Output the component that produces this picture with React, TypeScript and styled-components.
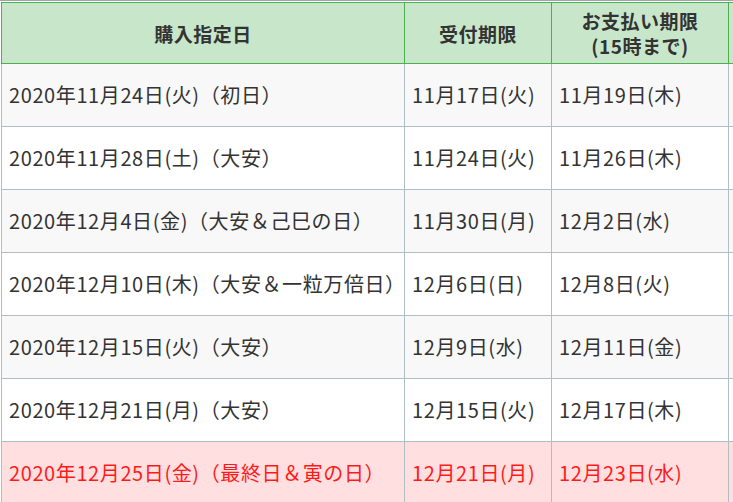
import { FC } from "react";
import styled, { createGlobalStyle } from "styled-components";

const GlobalStyle = createGlobalStyle`
    html, body {
        margin: 0;
        padding: 0;
        background: #fff;
        overflow: hidden;
    }
    body {
        font-family: "Noto Sans CJK JP", "Noto Sans", sans-serif;
        color: #333;
    }
`;

const Wrapper = styled.div`
    width: 733px;
    height: 502px;
    overflow: hidden;
    padding: 1px 0 0 1px;
    box-sizing: border-box;
    border-top: 1px solid #9aa9a0;
`;

const Table = styled.table`
    border-collapse: collapse;
    table-layout: fixed;
    width: 900px;
`;

const HeadCell = styled.th<{ $width: number }>`
    width: ${(p) => p.$width}px;
    height: 61px;
    box-sizing: border-box;
    padding: 5px 4px;
    background: #c8e6c9;
    border: 1px solid #4caf50;
    color: #333;
    font-size: 19px;
    font-weight: bold;
    line-height: 25px;
    text-align: center;
    vertical-align: middle;
    letter-spacing: 0.5px;
    white-space: nowrap;
`;

const HeadLine = styled.span`
    display: block;
`;

const Row = styled.tr<{ $last?: boolean }>`
    background: ${(p) => (p.$last ? "#ffdfe0" : "#fff")};

    &:nth-child(odd) {
        background: ${(p) => (p.$last ? "#ffdfe0" : "#f8f8f8")};
    }

    & > td {
        color: ${(p) => (p.$last ? "#ff1a1a" : "#333")};
    }
`;

const Cell = styled.td`
    height: 63px;
    box-sizing: border-box;
    padding: 0 7px;
    border: 1px solid #b0bec5;
    font-size: 20px;
    line-height: 28px;
    letter-spacing: 0.6px;
    white-space: nowrap;
    vertical-align: middle;
`;

interface IRow {
    date: string;
    accept: string;
    pay: string;
}

const rows: IRow[] = [
    { date: "2020年11月24日(火)（初日）", accept: "11月17日(火)", pay: "11月19日(木)" },
    { date: "2020年11月28日(土)（大安）", accept: "11月24日(火)", pay: "11月26日(木)" },
    { date: "2020年12月4日(金)（大安＆己巳の日）", accept: "11月30日(月)", pay: "12月2日(水)" },
    { date: "2020年12月10日(木)（大安＆一粒万倍日）", accept: "12月6日(日)", pay: "12月8日(火)" },
    { date: "2020年12月15日(火)（大安）", accept: "12月9日(水)", pay: "12月11日(金)" },
    { date: "2020年12月21日(月)（大安）", accept: "12月15日(火)", pay: "12月17日(木)" },
    { date: "2020年12月25日(金)（最終日＆寅の日）", accept: "12月21日(月)", pay: "12月23日(水)" },
];

const App: FC = () => {
    return (
        <>
            <GlobalStyle />
            <Wrapper>
                <Table>
                    <thead>
                        <tr>
                            <HeadCell $width={403}>購入指定日</HeadCell>
                            <HeadCell $width={147}>受付期限</HeadCell>
                            <HeadCell $width={177}>
                                <HeadLine>お支払い期限</HeadLine>
                                <HeadLine>(15時まで)</HeadLine>
                            </HeadCell>
                            <HeadCell $width={173}></HeadCell>
                        </tr>
                    </thead>
                    <tbody>
                        {rows.map((r, i) => (
                            <Row key={r.date} $last={i === rows.length - 1}>
                                <Cell>{r.date}</Cell>
                                <Cell>{r.accept}</Cell>
                                <Cell>{r.pay}</Cell>
                                <Cell></Cell>
                            </Row>
                        ))}
                    </tbody>
                </Table>
            </Wrapper>
        </>
    );
};

export default App;
